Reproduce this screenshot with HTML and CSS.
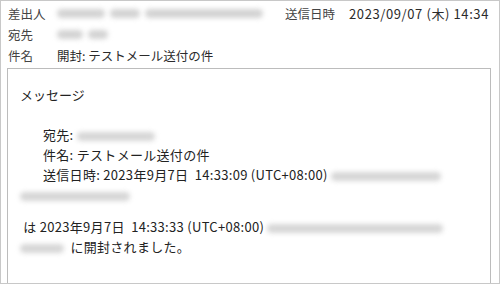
FILE: index.html
```html
<!DOCTYPE html>
<html lang="ja">
<head>
    <meta charset="UTF-8">
    <title>開封: テストメール送付の件</title>
    <link rel="stylesheet" href="styles.css">
</head>
<body>
    <div class="frame">
        <div class="header">
            <div class="row">
                <span class="label">差出人</span>
                <span class="blur" style="width: 48px"></span>
                <span class="blur gap" style="width: 30px"></span>
                <span class="blur gap" style="width: 118px"></span>
                <div class="sent">
                    <span class="sent-label">送信日時</span>
                    <span class="sent-date">2023/09/07 (木) 14:34</span>
                </div>
            </div>
            <div class="row">
                <span class="label">宛先</span>
                <span class="blur" style="width: 26px"></span>
                <span class="blur gap" style="width: 20px"></span>
            </div>
            <div class="row">
                <span class="label">件名</span>
                <span class="subject">開封: テストメール送付の件</span>
            </div>
        </div>

        <div class="message">
            <div class="title">メッセージ</div>
            <div class="info">
                <div class="line indent">宛先: <span class="blur soft" style="width: 78px"></span></div>
                <div class="line indent">件名: テストメール送付の件</div>
                <div class="line indent">送信日時: 2023年9月7日&nbsp; 14:33:09 (UTC+08:00) <span class="blur soft" style="width: 110px"></span></div>
                <div class="line"><span class="blur soft" style="width: 110px"></span></div>
            </div>
            <div class="notice">
                <div class="line">&nbsp;は 2023年9月7日&nbsp; 14:33:33 (UTC+08:00) <span class="blur soft" style="width: 176px"></span></div>
                <div class="line"><span class="blur soft" style="width: 44px"></span>&nbsp; に開封されました。</div>
            </div>
        </div>
    </div>
</body>
</html>
```

FILE: styles.css
```css
body {
    margin: 0;
    background-color: #ffffff;
}
.frame {
    width: 500px;
    height: 284px;
    box-sizing: border-box;
    border: 1px solid #c8c8c8;
    overflow: hidden;
    background-color: #ffffff;
}
.header {
    padding: 2px 0 0 7px;
    font-family: "Noto Sans CJK JP", "Noto Sans", sans-serif;
    font-size: 12.5px;
    color: #2b2b2b;
}
.row {
    display: flex;
    align-items: center;
    height: 21px;
    white-space: nowrap;
}
.label {
    width: 49px;
    color: #444444;
}
.sent {
    margin-left: auto;
    padding-right: 10px;
    display: flex;
    gap: 14px;
}
.sent-label {
    color: #444444;
}
.sent-date {
    font-size: 13px;
    letter-spacing: 0.6px;
}
.blur {
    display: inline-block;
    height: 9px;
    background-color: #d3d3d3;
    border-radius: 5px;
    filter: blur(2.5px);
    vertical-align: middle;
}
.blur.gap {
    margin-left: 5px;
}
.blur.soft {
    background-color: #d6d6d6;
}
.message {
    margin: 2px 0 0 6px;
    width: 484px;
    height: 240px;
    box-sizing: border-box;
    border: 1px solid #bcbcbc;
    padding: 16px 0 0 12px;
    font-family: "Noto Sans CJK JP", "Noto Sans", sans-serif;
    font-size: 13px;
    color: #222222;
}
.title {
    line-height: 20px;
}
.info {
    margin-top: 20px;
}
.line {
    line-height: 20px;
    white-space: nowrap;
    letter-spacing: 0.3px;
}
.indent {
    padding-left: 23px;
}
.notice {
    margin-top: 12px;
}
```
